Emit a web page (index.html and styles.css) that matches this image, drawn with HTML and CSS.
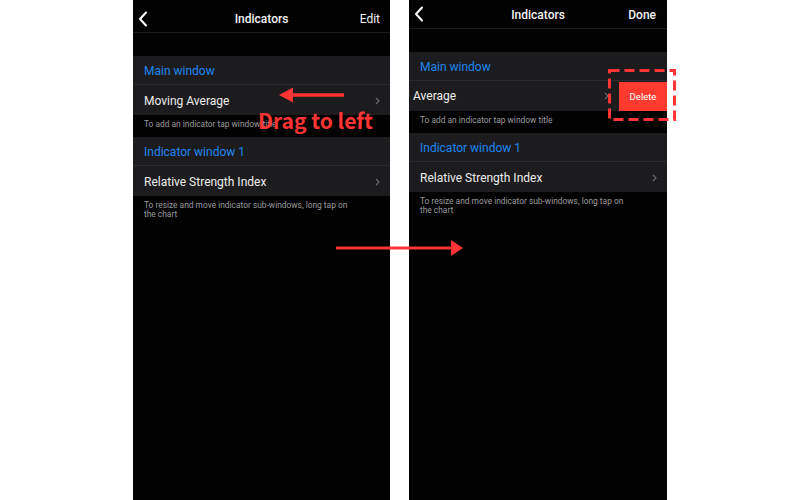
FILE: index.html
```html
<!DOCTYPE html>
<html lang="en">
<head>
    <meta charset="UTF-8">
    <meta name="viewport" content="width=device-width, initial-scale=1.0">
    <title>Indicators - swipe to delete</title>
    <link rel="stylesheet" href="styles.css">
</head>
<body>
<div class="stage">
    <!-- before: edit mode -->
    <div class="phone">
        <div class="nav">
            <svg class="back" width="10" height="16" viewBox="0 0 10 16"><path d="M8 1.5 L2 8 L8 14.5" fill="none" stroke="#fff" stroke-width="2" stroke-linecap="round" stroke-linejoin="round"/></svg>
            <span class="nav-title">Indicators</span>
            <span class="nav-action">Edit</span>
        </div>
        <div class="group">
            <div class="group-head">Main window</div>
            <div class="row">
                <span class="row-label">Moving Average</span>
                <svg class="chev" width="5" height="8" viewBox="0 0 5 8"><path d="M1 1 L4 4 L1 7" fill="none" stroke="#6b6b70" stroke-width="1.1"/></svg>
            </div>
        </div>
        <p class="note">To add an indicator tap window title</p>
        <div class="group">
            <div class="group-head">Indicator window 1</div>
            <div class="row">
                <span class="row-label">Relative Strength Index</span>
                <svg class="chev" width="5" height="8" viewBox="0 0 5 8"><path d="M1 1 L4 4 L1 7" fill="none" stroke="#6b6b70" stroke-width="1.1"/></svg>
            </div>
        </div>
        <p class="note">To resize and move indicator sub-windows, long tap on<br>the chart</p>
    </div>

    <!-- after: row swiped -->
    <div class="phone phone-short">
        <div class="nav">
            <svg class="back" width="10" height="16" viewBox="0 0 10 16"><path d="M8 1.5 L2 8 L8 14.5" fill="none" stroke="#fff" stroke-width="2" stroke-linecap="round" stroke-linejoin="round"/></svg>
            <span class="nav-title">Indicators</span>
            <span class="nav-action">Done</span>
        </div>
        <div class="group">
            <div class="group-head">Main window</div>
            <div class="row row-swiped">
                <span class="row-label">Average</span>
                <svg class="chev" width="5" height="8" viewBox="0 0 5 8"><path d="M1 1 L4 4 L1 7" fill="none" stroke="#6b6b70" stroke-width="1.1"/></svg>
                <span class="delete-btn">Delete</span>
            </div>
        </div>
        <p class="note">To add an indicator tap window title</p>
        <div class="group">
            <div class="group-head">Indicator window 1</div>
            <div class="row">
                <span class="row-label">Relative Strength Index</span>
                <svg class="chev" width="5" height="8" viewBox="0 0 5 8"><path d="M1 1 L4 4 L1 7" fill="none" stroke="#6b6b70" stroke-width="1.1"/></svg>
            </div>
        </div>
        <p class="note">To resize and move indicator sub-windows, long tap on<br>the chart</p>
    </div>

    <!-- annotations -->
    <svg class="arrow-left" width="66" height="18" viewBox="0 0 66 18"><path d="M65 9 H12" stroke="#ff3535" stroke-width="3.5"/><path d="M0 9 L14 1.5 L14 16.5 Z" fill="#ff3535"/></svg>
    <span class="drag-label">Drag to left</span>
    <svg class="arrow-mid" width="128" height="18" viewBox="0 0 128 18"><path d="M0 9 H116" stroke="#ff3535" stroke-width="3"/><path d="M127 9 L115 1 L115 17 Z" fill="#ff3535"/></svg>
    <svg class="dash-box" width="68" height="52" viewBox="0 0 68 52"><rect x="1.5" y="1.5" width="65" height="49" fill="none" stroke="#ff3535" stroke-width="3" stroke-dasharray="10 5"/></svg>
</div>
</body>
</html>
```

FILE: styles.css
```css
body {
    margin: 0;
    background-color: #ffffff;
    font-family: Roboto, "Liberation Sans", sans-serif;
}

.stage {
    position: relative;
    width: 534px;
    height: 500px;
    margin: 0 auto;
    display: flex;
    gap: 19px;
}

.phone {
    width: 257px;
    height: 500px;
    background-color: #020202;
    color: #ececec;
    display: flex;
    flex-direction: column;
}

.phone-short {
    width: 258px;
}

.nav {
    position: relative;
    box-sizing: border-box;
    height: 33px;
    padding-bottom: 6px;
    border-bottom: 1px solid #1b1b1d;
    display: flex;
    align-items: flex-end;
    justify-content: center;
    margin-bottom: 23px;
}

.phone-short .nav {
    height: 29px;
}

.nav .back {
    position: absolute;
    left: 5px;
    bottom: 5px;
}

.phone-short .nav .back {
    bottom: 6px;
}

.nav-title {
    font-size: 12px;
    line-height: 14px;
    font-weight: 500;
    color: #f2f2f2;
}

.nav-action {
    position: absolute;
    right: 10px;
    bottom: 6px;
    font-size: 12px;
    line-height: 14px;
    color: #f2f2f2;
}

.phone-short .nav-action {
    right: 11px;
    font-weight: 500;
}

.group {
    background-color: #1c1c1e;
}

.group-head {
    box-sizing: border-box;
    height: 29px;
    padding: 2px 0 0 11px;
    display: flex;
    align-items: center;
    font-size: 12px;
    color: #1f86f0;
    border-bottom: 1px solid #2a2a2c;
}

.row {
    height: 30px;
    padding: 1px 10px 0 11px;
    box-sizing: border-box;
    display: flex;
    align-items: center;
    justify-content: space-between;
    font-size: 12px;
}

.row-label {
    color: #ececec;
}

.row-swiped {
    padding: 0;
}

.row-swiped .row-label {
    flex: 1;
    padding-left: 4px;
}

.row-swiped .chev {
    margin-right: 10px;
}

.delete-btn {
    width: 48px;
    height: 29px;
    margin-top: 1px;
    background-color: #ff3b30;
    color: #ffffff;
    font-size: 9.5px;
    display: flex;
    align-items: center;
    justify-content: center;
}

.note {
    margin: 0;
    padding: 5px 11px 0;
    height: 17px;
    font-size: 8.4px;
    line-height: 9px;
    color: #9a9a9e;
}

.arrow-left {
    position: absolute;
    left: 146px;
    top: 86px;
}

.drag-label {
    position: absolute;
    left: 125px;
    top: 110px;
    font-family: "Noto Sans CJK JP", "Noto Sans", sans-serif;
    font-weight: 700;
    font-size: 21px;
    line-height: 1;
    color: #ff3535;
}

.arrow-mid {
    position: absolute;
    left: 203px;
    top: 239px;
}

.dash-box {
    position: absolute;
    left: 475px;
    top: 69px;
}
```
